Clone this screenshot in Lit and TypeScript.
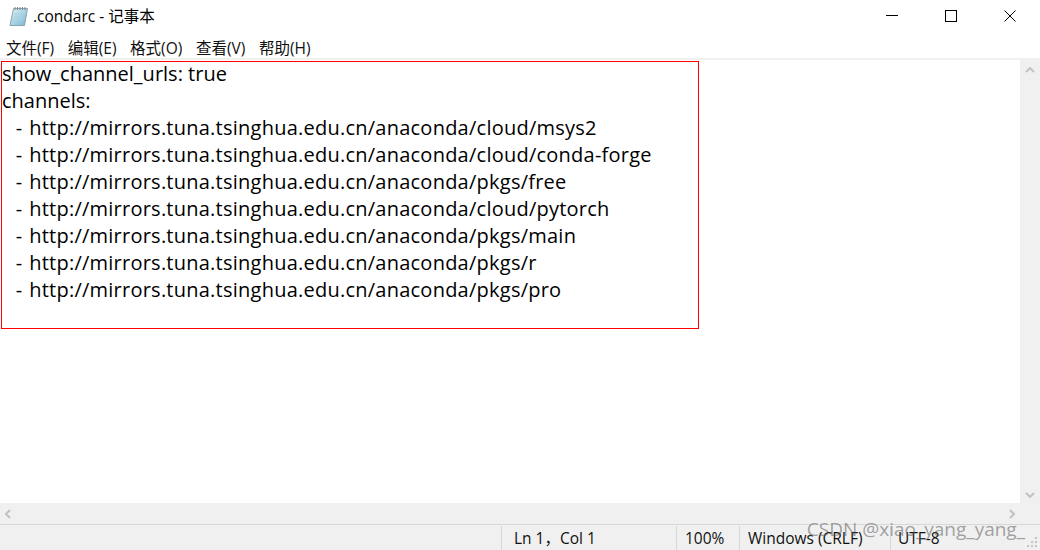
import { LitElement, html, css, svg } from "lit";
import { customElement } from "lit/decorators.js";

const HEAD = ["show_channel_urls: true", "channels:"];
const BASE = "http://mirrors.tuna.tsinghua.edu.cn/anaconda/";
const URLS = ["cloud/msys2", "cloud/conda-forge", "pkgs/free", "cloud/pytorch", "pkgs/main", "pkgs/r", "pkgs/pro"];
const MENU = ["文件(F)", "编辑(E)", "格式(O)", "查看(V)", "帮助(H)"];

const notepad = svg`<svg width="20" height="20" viewBox="0 0 20 20">
  <defs><linearGradient id="g" x1="0" y1="0" x2="1" y2="1"><stop offset="0" stop-color="#e3f3f8"/><stop offset="1" stop-color="#74b6d2"/></linearGradient></defs>
  <path d="M4.5 2.5h14l-3 17H1z" fill="url(#g)" stroke="#8aa4b0" stroke-width="1"/>
  <path d="M6 1v3M8.5 1v3M11 1v3M13.5 1v3M16 1v3" stroke="#80888c" stroke-width="1"/>
  <path d="M5 8h10M4.4 11h10M3.8 14h10" stroke="#a9d2e2" stroke-width="1"/>
</svg>`;

@customElement("app-root")
export class AppRoot extends LitElement {
  static styles = css`
    :host { display: block; width: 1040px; height: 550px; position: relative; overflow: hidden; background: #fff;
      font-family: "Open Sans", "Noto Sans CJK SC", sans-serif; color: #000; }
    .win { display: flex; flex-direction: column; height: 550px; }
    .title { height: 34px; display: flex; align-items: center; flex: none; }
    .icon { margin-left: 9px; width: 20px; height: 20px; margin-top: -3px; }
    .tname { margin-left: 4px; font-size: 15.5px; line-height: 20px; margin-top: -2px; }
    .ctrls { margin-left: auto; display: flex; margin-right: 1px; margin-top: -3px; }
    .ctrl { width: 59px; height: 34px; display: flex; align-items: center; justify-content: center; }
    .menu { height: 24px; flex: none; display: flex; padding-left: 6px; gap: 13.6px; font-size: 15.5px; line-height: 28px; color: #111; border-bottom: 2px solid #f0f0f0; }
    .mid { flex: 1; display: flex; min-height: 0; }
    .edit { flex: 1; padding: 0 0 0 2px; font-size: 20px; line-height: 27px; }
    .line { height: 27px; white-space: pre; }
    .item { letter-spacing: 0.24px; word-spacing: 1.4px; }
    .vbar { width: 20px; flex: none; background: #f0f0f0; display: flex; flex-direction: column; justify-content: space-between; align-items: center; padding: 7px 0 5px; }
    .hbar { height: 21px; flex: none; background: #f0f0f0; display: flex; justify-content: space-between; align-items: center; padding: 0 25px 0 5px; }
    .status { height: 26px; box-sizing: border-box; flex: none; background: #f0f0f0; border-top: 1px solid #d7d7d7; display: flex; font-size: 15.5px; position: relative; }
    .cell { border-left: 1px solid #d7d7d7; padding-left: 12px; margin-top: 1px; box-sizing: border-box; white-space: pre; color: #111; line-height: 24px; }
    .c0 { margin-left: 501px; width: 175px; }
    .c1 { width: 63px; padding-left: 8px; }
    .c2 { width: 151px; padding-left: 8px; }
    .c3 { flex: 1; padding-left: 7px; }
    .grip { position: absolute; right: 2px; bottom: 2px; }
    .box { position: absolute; left: 1px; top: 61px; width: 698px; height: 268px; box-sizing: border-box; border: 1px solid #f00; pointer-events: none; }
    .mark { position: absolute; right: 15px; bottom: 7px; font-size: 19px; line-height: 28px; color: rgba(90, 90, 90, 0.55); white-space: pre; }
  `;

  render() {
    return html`<div class="win">
      <div class="title">
        <div class="icon">${notepad}</div>
        <div class="tname">.condarc - 记事本</div>
        <div class="ctrls">
          <div class="ctrl"><svg width="12" height="12"><path d="M0 5.5h12" stroke="#000"/></svg></div>
          <div class="ctrl"><svg width="12" height="12"><rect x=".5" y=".5" width="11" height="11" fill="none" stroke="#000"/></svg></div>
          <div class="ctrl"><svg width="12" height="12"><path d="M.5.5l11 11M11.5.5l-11 11" stroke="#000"/></svg></div>
        </div>
      </div>
      <div class="menu">${MENU.map((m) => html`<span>${m}</span>`)}</div>
      <div class="mid">
        <div class="edit">
          ${HEAD.map((l) => html`<div class="line">${l}</div>`)}
          ${URLS.map((u) => html`<div class="line item">  - ${BASE}${u}</div>`)}
        </div>
        <div class="vbar">
          <svg width="10" height="6"><path d="M1 5l4-4 4 4" fill="none" stroke="#c2c2c2" stroke-width="2"/></svg>
          <svg width="10" height="6"><path d="M1 1l4 4 4-4" fill="none" stroke="#c2c2c2" stroke-width="2"/></svg>
        </div>
      </div>
      <div class="hbar">
        <svg width="6" height="10"><path d="M5 1L1 5l4 4" fill="none" stroke="#c2c2c2" stroke-width="2"/></svg>
        <svg width="6" height="10"><path d="M1 1l4 4-4 4" fill="none" stroke="#c2c2c2" stroke-width="2"/></svg>
      </div>
      <div class="status">
        <div class="cell c0">Ln 1，Col 1</div>
        <div class="cell c1">100%</div>
        <div class="cell c2">Windows (CRLF)</div>
        <div class="cell c3">UTF-8</div>
        <svg class="grip" width="11" height="11" fill="#c4c4c4"><rect x="8" y="0" width="2" height="2"/><rect x="4" y="4" width="2" height="2"/><rect x="8" y="4" width="2" height="2"/><rect x="0" y="8" width="2" height="2"/><rect x="4" y="8" width="2" height="2"/><rect x="8" y="8" width="2" height="2"/></svg>
      </div>
    </div>
    <div class="box"></div>
    <div class="mark">CSDN @xiao_yang_yang_</div>`;
  }
}
